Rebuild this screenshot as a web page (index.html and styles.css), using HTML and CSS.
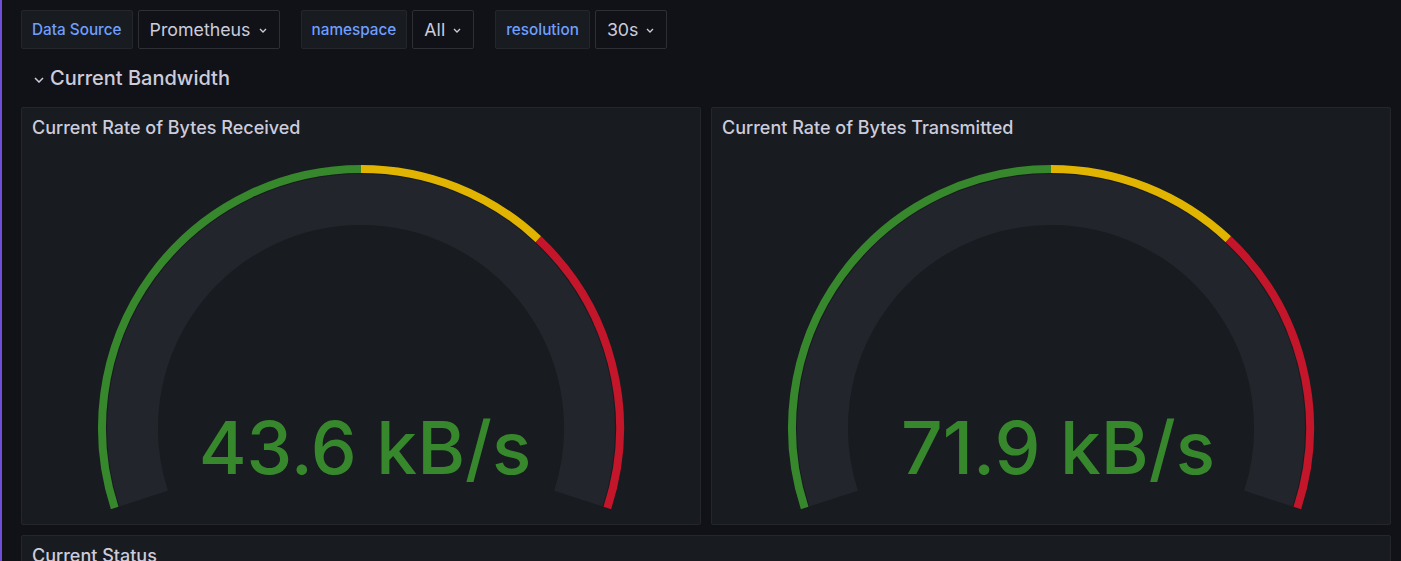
FILE: index.html
```html
<!DOCTYPE html>
<html lang="en">
<head>
<meta charset="utf-8">
<title>Current Bandwidth</title>
<link rel="stylesheet" href="styles.css">
</head>
<body>
<div class="page">
  <div class="vars">
    <div class="var">
      <span class="lbl">Data Source</span>
      <span class="sel">Prometheus <svg class="chev" viewBox="0 0 8 5" width="8" height="5"><path d="M1 1 L4 4 L7 1" fill="none" stroke="currentColor" stroke-width="1.3"/></svg></span>
    </div>
    <div class="var">
      <span class="lbl">namespace</span>
      <span class="sel">All <svg class="chev" viewBox="0 0 8 5" width="8" height="5"><path d="M1 1 L4 4 L7 1" fill="none" stroke="currentColor" stroke-width="1.3"/></svg></span>
    </div>
    <div class="var">
      <span class="lbl">resolution</span>
      <span class="sel">30s <svg class="chev" viewBox="0 0 8 5" width="8" height="5"><path d="M1 1 L4 4 L7 1" fill="none" stroke="currentColor" stroke-width="1.3"/></svg></span>
    </div>
  </div>

  <div class="row-hdr">
    <svg class="row-chev" viewBox="0 0 10 6" width="10" height="6"><path d="M1 1 L5 5 L9 1" fill="none" stroke="currentColor" stroke-width="1.5"/></svg>
    <span class="row-title">Current Bandwidth</span>
  </div>

  <div class="grid">
    <section class="panel">
      <div class="ptitle">Current Rate of Bytes Received</div>
      <svg class="gauge" viewBox="0 0 678 375" width="678" height="375">
        <path d="M121.68 349.61 A228.5 228.5 0 1 1 556.32 349.61" fill="none" stroke="#22252b" stroke-width="51"/>
        <path d="M92.68 359.04 A259 259 0 0 1 339 20" fill="none" stroke="#37872d" stroke-width="8"/>
        <path d="M339 20 A259 259 0 0 1 516.35 90.25" fill="none" stroke="#e0b400" stroke-width="8"/>
        <path d="M516.35 90.25 A259 259 0 0 1 585.32 359.04" fill="none" stroke="#c4162a" stroke-width="8"/>
        <text class="gval" x="343" y="325" text-anchor="middle">43.6 kB/s</text>
      </svg>
    </section>
    <section class="panel">
      <div class="ptitle">Current Rate of Bytes Transmitted</div>
      <svg class="gauge" viewBox="0 0 678 375" width="678" height="375">
        <path d="M121.68 349.61 A228.5 228.5 0 1 1 556.32 349.61" fill="none" stroke="#22252b" stroke-width="51"/>
        <path d="M92.68 359.04 A259 259 0 0 1 339 20" fill="none" stroke="#37872d" stroke-width="8"/>
        <path d="M339 20 A259 259 0 0 1 516.35 90.25" fill="none" stroke="#e0b400" stroke-width="8"/>
        <path d="M516.35 90.25 A259 259 0 0 1 585.32 359.04" fill="none" stroke="#c4162a" stroke-width="8"/>
        <text class="gval" x="346" y="325" text-anchor="middle">71.9 kB/s</text>
      </svg>
    </section>
  </div>

  <section class="panel status">
    <div class="ptitle">Current Status</div>
  </section>
</div>
</body>
</html>
```
FILE: styles.css
```css
html, body {
  margin: 0;
  padding: 0;
  height: 100%;
  overflow: hidden;
  background: #111217;
}
body {
  font-family: Inter, "Noto Sans", "Liberation Sans", sans-serif;
  color: #ccccdc;
}
.page {
  border-left: 2px solid #6f4fd8;
  min-height: 100%;
  box-sizing: border-box;
  padding: 10px 10px 0 19px;
}
.vars {
  display: flex;
  gap: 21px;
}
.var {
  display: flex;
  gap: 5px;
}
.lbl {
  height: 39px;
  box-sizing: border-box;
  display: flex;
  align-items: center;
  padding: 0 10px 0 10px;
  background: #181b1f;
  border: 1px solid #24262c;
  border-radius: 2px;
  color: #6e9fff;
  font-size: 15.3px;
  font-weight: 500;
}
.sel {
  height: 39px;
  box-sizing: border-box;
  display: flex;
  align-items: center;
  gap: 8px;
  padding: 0 12px 0 11px;
  background: #111217;
  border: 1px solid #2d2f36;
  border-radius: 2px;
  color: #ccccdc;
  font-size: 17.8px;
}
.chev {
  display: block;
  margin-top: 1px;
}
.row-hdr {
  height: 58px;
  display: flex;
  align-items: center;
  gap: 6px;
  padding-left: 13px;
}
.row-chev {
  display: block;
  margin-top: 3px;
}
.row-title {
  font-size: 20px;
  font-weight: 500;
}
.grid {
  display: grid;
  grid-template-columns: 680px 680px;
  gap: 10px;
}
.panel {
  background: #181b1f;
  border: 1px solid #24262c;
  border-radius: 2px;
}
.ptitle {
  height: 41px;
  box-sizing: border-box;
  padding: 9px 0 0 10px;
  font-size: 18px;
  font-weight: 500;
  line-height: 22px;
}
.gauge {
  display: block;
}
.gval {
  fill: #37872d;
  font-family: Inter, "Noto Sans", sans-serif;
  font-size: 73px;
  font-weight: 500;
}
.status {
  margin-top: 10px;
  height: 300px;
}
```
